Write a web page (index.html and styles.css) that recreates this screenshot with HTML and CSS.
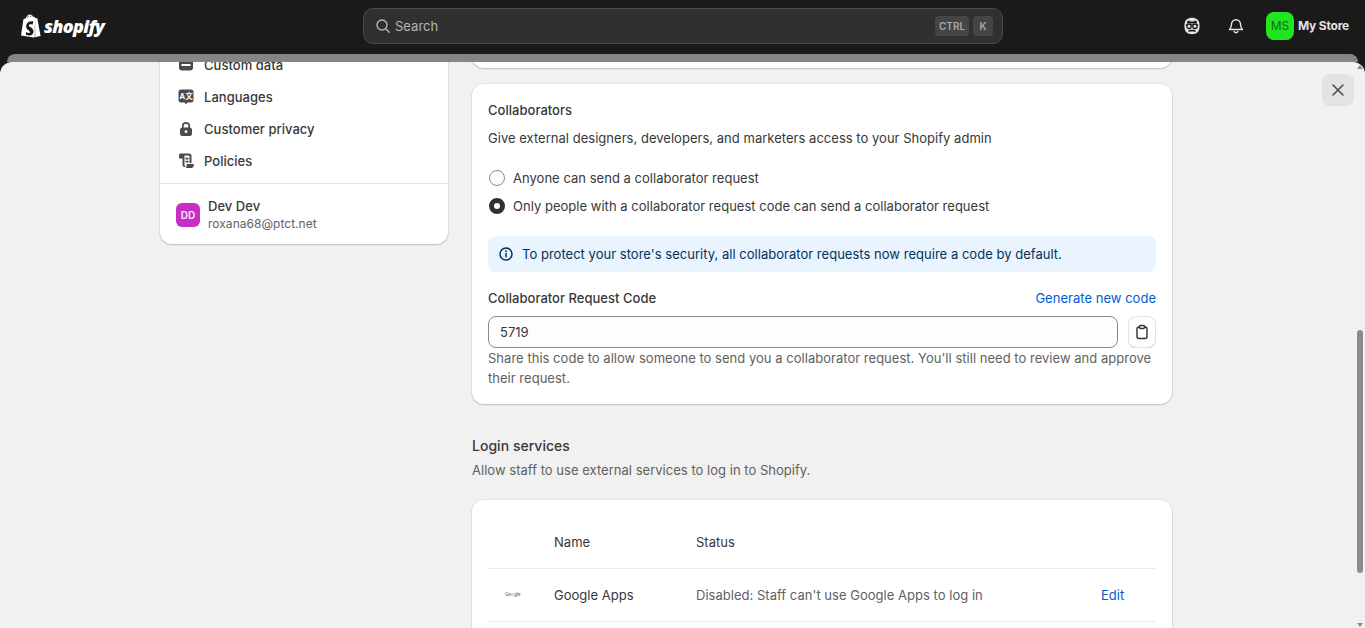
FILE: index.html
```html
<!doctype html>
<html lang="en">
  <head>
    <meta charset="UTF-8" />
    <meta name="viewport" content="width=device-width, initial-scale=1.0" />
    <title>Shopify admin - Users and permissions</title>
    <link rel="stylesheet" href="styles.css">
  </head>
  <body>
    <header class="topbar">
      <div class="brand">
        <svg class="brand-bag" width="22" height="25" viewBox="0 0 22 25">
          <path fill="#fff" d="M1 21.500 3.400 5.600c.1-.5.3-.7.8-.9l1.700-.5C6.500 2 8 .4 10 .4c1 0 1.500.5 1.800 1 .6 0 1.200.4 1.500 1.400l1 .1 1.300 1.200 1.700.2L20.600 22l-7 1.600z" />
          <path fill="#1a1a1a" d="M7.100 3.900c.4-1.300 1.400-2.400 2.700-2.500-.3.100-1.500.9-1.800 2.200zM10.500 3c0-.5 0-1-.2-1.300.6.100 1 .8 1.100 1zM12.200 2.600c-.1-.3-.2-.5-.3-.6.500.1.700.4.800.5z" />
          <path fill="#1a1a1a" d="M13.200 8.200 12.500 10.700c-.6-.3-1.300-.5-2-.4-1.700.1-1.700 1.100-1.700 1.400.1 1.400 4.500 1.700 4.700 5.400.2 3-1.600 4.400-3.900 4.500-2.600.1-3.900-1.300-3.900-1.300l.6-2.300s1.400 1.100 2.600 1c.8 0 1-.6 1-1-.1-2-3.500-1.900-3.700-5.300-.2-2.800 1.700-5.300 5.400-5.500 1 0 1.500.1 1.500.1z" />
          <path fill="#1a1a1a" d="M15 3.600 14.600 23.400l.8-.2-.3-19.500z" opacity=".5" />
        </svg>
        <span class="brand-name">shopify</span>
      </div>

      <div class="search">
        <svg width="16" height="16" viewBox="0 0 16 16" fill="none" stroke="#b5b5b5" stroke-width="1.400">
          <circle cx="7" cy="7" r="5" />
          <path d="m10.800 10.800 3.400 3.400" stroke-linecap="round" />
        </svg>
        <span class="search-text">Search</span>
        <span class="kbd kbd-ctrl">CTRL</span>
        <span class="kbd kbd-key">K</span>
      </div>

      <div class="top-actions">
        <svg class="top-icon" width="18" height="18" viewBox="0 0 18 18">
          <path fill="#e3e3e3" d="M9 .8c4.200 0 7.600 1.800 7.600 8.200S13.200 17.200 9 17.200 1.400 15.400 1.400 9 4.800.8 9 .8z" />
          <path fill="#1a1a1a" d="M2.800 7.300h12.400v1.200H2.800z" />
          <circle cx="6" cy="9.300" r="2.200" fill="#e3e3e3" stroke="#1a1a1a" stroke-width="1.300" />
          <circle cx="12" cy="9.300" r="2.200" fill="#e3e3e3" stroke="#1a1a1a" stroke-width="1.300" />
          <path fill="#1a1a1a" d="M4.800 3.600 9 4.800l4.200-1.200 1 2.900H3.800zM4.800 14.300c1.200-1.500 2.800-1.900 4.200-1.200 1.400-.7 3-.3 4.200 1.200-1.400.6-2.800.5-4.200 0-1.400.5-2.800.6-4.200 0z" />
        </svg>
        <svg class="top-icon bell" width="18" height="18" viewBox="0 0 18 18" fill="none" stroke="#e3e3e3" stroke-width="1.400" stroke-linejoin="round">
          <path d="M4.500 7.200a4.500 4.500 0 0 1 9 0c0 2.800 1 4 2 5.300H2.500c1-1.300 2-2.500 2-5.300z" />
          <path d="M7.200 14.500a1.900 1.900 0 0 0 3.600 0" stroke-linecap="round" />
        </svg>
        <div class="store">
          <span class="store-avatar">MS</span>
          <span class="store-name">My Store</span>
        </div>
      </div>
    </header>

    <div class="sheet-behind"></div>

    <main class="sheet">
      <button class="close-btn" aria-label="Close">
        <svg width="16" height="16" viewBox="0 0 16 16" fill="none" stroke="#4a4a4a" stroke-width="1.500" stroke-linecap="round">
          <path d="m3 3 10 10M13 3 3 13" />
        </svg>
      </button>

      <div class="scrollbar">
        <span class="arrow-up"></span>
        <span class="thumb"></span>
        <span class="arrow-down"></span>
      </div>

      <div class="layout">
        <aside class="side-card">
          <nav class="side-nav">
            <a class="nav-item">
              <svg width="16" height="16" viewBox="0 0 16 16">
                <rect x="1" y="2.500" width="14" height="11" rx="3" fill="#4a4a4a" />
                <rect x="3.500" y="7" width="9" height="2" fill="#fff" />
              </svg>
              Custom data
            </a>
            <a class="nav-item">
              <svg width="16" height="16" viewBox="0 0 16 16">
                <path fill="#4a4a4a" d="M3 .5h10A2.500 2.500 0 0 1 15.500 3v8a2.500 2.500 0 0 1-2.500 2.500H9.500L8 15.500 6.500 13.500H3A2.500 2.500 0 0 1 .5 11V3A2.500 2.500 0 0 1 3 .5z" />
                <text class="icon-glyph" x="1.600" y="10.200">A</text>
                <text class="icon-glyph" x="7.300" y="10.200">文</text>
              </svg>
              Languages
            </a>
            <a class="nav-item">
              <svg width="16" height="16" viewBox="0 0 16 16">
                <path fill="none" stroke="#4a4a4a" stroke-width="1.700" d="M4.800 7V5a3.200 3.200 0 0 1 6.400 0v2" />
                <rect x="2" y="6.500" width="12" height="8.500" rx="2.500" fill="#4a4a4a" />
                <circle cx="8" cy="10.700" r="1.400" fill="#fff" />
              </svg>
              Customer privacy
            </a>
            <a class="nav-item">
              <svg width="16" height="16" viewBox="0 0 16 16">
                <path fill="#4a4a4a" d="M2.500 .5H11a2.500 2.500 0 0 1 2.500 2.500v7h-2V3a.5.500 0 0 0-.5-.5H5.500V5.500H1V2A1.500 1.500 0 0 1 2.500 .5z" />
                <path fill="#4a4a4a" d="M4.500 2h2v9.500c0 1 .6 2 1.200 2.500H6.500C5 14 4.500 12.700 4.500 11.500zM8.500 11h7.300v1c0 1.500-.8 3-2.300 3H7.700c1-.8 1-2.700.8-4z" />
                <path fill="#4a4a4a" d="M7.500 4.800h3v1.700h-3zM7.500 7.800h3v1.700h-3z" />
              </svg>
              Policies
            </a>
          </nav>
          <div class="side-user">
            <span class="user-avatar">DD</span>
            <div>
              <div class="user-name">Dev Dev</div>
              <div class="user-mail">roxana68@ptct.net</div>
            </div>
          </div>
        </aside>

        <section class="content">
          <div class="card card-prev"></div>

          <div class="card">
            <h2 class="card-title">Collaborators</h2>
            <p class="card-desc">Give external designers, developers, and marketers access to your Shopify admin</p>

            <div class="radios">
              <label class="radio-row">
                <span class="radio"></span>
                Anyone can send a collaborator request
              </label>
              <label class="radio-row">
                <span class="radio checked"></span>
                Only people with a collaborator request code can send a collaborator request
              </label>
            </div>

            <div class="banner">
              <svg width="16" height="16" viewBox="0 0 16 16" fill="none" stroke="#00335b" stroke-width="1.500">
                <circle cx="8" cy="8" r="6" />
                <path d="M8 7.500v3.200" stroke-linecap="round" />
                <circle cx="8" cy="5.200" r=".9" fill="#00335b" stroke="none" />
              </svg>
              To protect your store's security, all collaborator requests now require a code by default.
            </div>

            <div class="code-head">
              <span class="code-label">Collaborator Request Code</span>
              <a class="link">Generate new code</a>
            </div>
            <div class="code-row">
              <div class="code-input">5719</div>
              <button class="copy-btn" aria-label="Copy">
                <svg width="16" height="16" viewBox="0 0 16 16" fill="none" stroke="#303030" stroke-width="1.400" stroke-linejoin="round">
                  <rect x="3" y="3" width="10" height="11.500" rx="2" />
                  <rect x="5.500" y="1.500" width="5" height="3" rx="1" fill="#fff" />
                </svg>
              </button>
            </div>
            <p class="help">Share this code to allow someone to send you a collaborator request. You'll still need to review and approve their request.</p>
          </div>

          <div class="section-head">
            <h2 class="section-title">Login services</h2>
            <p class="section-desc">Allow staff to use external services to log in to Shopify.</p>
          </div>

          <div class="card">
            <table class="services">
              <thead>
                <tr>
                  <th class="col-logo"></th>
                  <th class="col-name">Name</th>
                  <th>Status</th>
                  <th></th>
                </tr>
              </thead>
              <tbody>
                <tr>
                  <td class="google-logo"><span class="g-blue">G</span><span class="g-red">o</span><span class="g-yellow">o</span><span class="g-blue">g</span><span class="g-green">l</span><span class="g-red">e</span></td>
                  <td class="service-name">Google Apps</td>
                  <td class="service-status">Disabled: Staff can't use Google Apps to log in</td>
                  <td class="service-edit"><a class="link">Edit</a></td>
                </tr>
              </tbody>
            </table>
          </div>
        </section>
      </div>
    </main>
  </body>
</html>
```

FILE: styles.css
```css
* {
  box-sizing: border-box;
}
html,
body {
  height: 100%;
}
body {
  margin: 0;
  display: flex;
  flex-direction: column;
  overflow: hidden;
  background: #1a1a1a;
  color: #383838;
  font-family: Inter, 'Noto Sans', sans-serif;
  font-size: 13px;
  line-height: 20px;
  letter-spacing: 0.025px;
}
h2,
p {
  margin: 0;
}

/* top bar */
.topbar {
  flex: none;
  height: 54px;
  display: flex;
  align-items: center;
  padding: 0 15px 2px 20px;
}
.brand {
  width: 343px;
  display: flex;
  align-items: center;
  gap: 2px;
}
.brand-name {
  color: #fff;
  font-family: 'Open Sans', sans-serif;
  font-style: italic;
  font-weight: 800;
  font-size: 18px;
  letter-spacing: -0.7px;
}
.search {
  width: 640px;
  height: 36px;
  display: flex;
  align-items: center;
  gap: 4px;
  padding: 0 9px 0 11px;
  background: #303030;
  border: 1px solid #4a4a4a;
  border-radius: 10px;
}
.search-text {
  flex: 1;
  color: #b5b5b5;
}
.kbd {
  height: 20px;
  background: #454545;
  border-radius: 4px;
  color: #a8a8a8;
  font-size: 10px;
  font-weight: 600;
  line-height: 21px;
  text-align: center;
}
.kbd-ctrl {
  width: 34px;
}
.kbd-key {
  width: 20px;
}
.top-actions {
  flex: 1;
  display: flex;
  align-items: center;
  padding-left: 180px;
}
.top-icon {
  flex: none;
}
.bell {
  margin-left: 26px;
}
.store {
  display: flex;
  align-items: center;
  gap: 4px;
  margin-left: 21px;
}
.store-avatar {
  flex: none;
  width: 28px;
  height: 28px;
  display: flex;
  align-items: center;
  justify-content: center;
  background: #22e522;
  border-radius: 8px;
  color: #0f6b14;
  font-size: 12px;
}
.store-name {
  color: #e3e3e3;
  font-size: 12px;
  font-weight: 700;
  letter-spacing: -0.2px;
  white-space: nowrap;
}

/* the sheet */
.sheet-behind {
  flex: none;
  height: 8px;
  margin: 0 7px;
  background: #858585;
  border-radius: 10px 10px 0 0;
}
.sheet {
  flex: 1;
  position: relative;
  overflow: hidden;
  background: #f1f1f1;
  border-radius: 12px 12px 0 0;
}
.close-btn {
  position: absolute;
  top: 12px;
  right: 11px;
  width: 32px;
  height: 32px;
  display: flex;
  align-items: center;
  justify-content: center;
  padding: 0;
  background: #e3e3e3;
  border: none;
  border-radius: 8px;
}
.scrollbar {
  position: absolute;
  top: 0;
  right: 0;
  bottom: 0;
  width: 10px;
}
.thumb {
  position: absolute;
  top: 268px;
  left: 2px;
  width: 6px;
  height: 243px;
  background: #8b8b8b;
  border-radius: 3px;
}
.arrow-up,
.arrow-down {
  position: absolute;
  left: 2px;
  width: 0;
  height: 0;
  border-left: 3px solid transparent;
  border-right: 3px solid transparent;
}
.arrow-up {
  top: 3px;
  border-bottom: 4px solid #8b8b8b;
}
.arrow-down {
  bottom: 1px;
  border-top: 4px solid #8b8b8b;
}

.layout {
  display: grid;
  grid-template-columns: 288px 700px;
  gap: 24px;
  align-items: start;
  margin: -34px 0 0 160px;
}

/* left menu */
.side-card {
  background: #fff;
  border-radius: 12px;
  box-shadow: 0 1px 2px rgba(0, 0, 0, 0.2), 0 0 0 1px rgba(0, 0, 0, 0.03);
}
.side-nav {
  padding: 21px 0 6px;
  border-bottom: 1px solid #e3e3e3;
}
.nav-item {
  height: 32px;
  display: flex;
  align-items: center;
  gap: 10px;
  padding-left: 18px;
  font-weight: 500;
}
.icon-glyph {
  fill: #fff;
  font-family: Inter, 'Noto Sans CJK SC', sans-serif;
  font-size: 7.500px;
  font-weight: 700;
}
.side-user {
  height: 60px;
  display: flex;
  align-items: center;
  gap: 8px;
  padding: 2px 0 0 16px;
}
.user-avatar {
  width: 24px;
  height: 24px;
  display: flex;
  align-items: center;
  justify-content: center;
  background: #c62fc6;
  border-radius: 6px;
  color: #f6dcf6;
  font-size: 10px;
  font-weight: 700;
}
.user-name {
  font-weight: 500;
  line-height: 18px;
}
.user-mail {
  color: #616161;
  font-size: 12px;
  line-height: 18px;
}

/* cards */
.content {
  min-width: 0;
}
.card {
  margin-top: 16px;
  padding: 16px;
  background: #fff;
  border-radius: 12px;
  box-shadow: 0 1px 2px rgba(0, 0, 0, 0.2), 0 0 0 1px rgba(0, 0, 0, 0.03);
}
.card-prev {
  height: 40px;
  margin-top: 0;
}
.card-title {
  font-size: 13px;
  font-weight: 550;
}
.card-desc {
  margin-top: 8px;
}
.radios {
  margin-top: 16px;
}
.radio-row {
  height: 28px;
  display: flex;
  align-items: center;
  gap: 8px;
  padding-left: 1px;
}
.radio {
  width: 16px;
  height: 16px;
  background: #fdfdfd;
  border: 1px solid #8a8a8a;
  border-radius: 50%;
}
.radio.checked {
  background: #fff;
  border: 5px solid #303030;
}
.banner {
  height: 36px;
  display: flex;
  align-items: center;
  gap: 8px;
  margin-top: 16px;
  padding-left: 10px;
  background: #eaf4ff;
  border-radius: 8px;
  color: #00335b;
}
.code-head {
  display: flex;
  justify-content: space-between;
  margin-top: 16px;
}
.code-label {
  font-weight: 500;
}
.link {
  color: #005bd3;
}
.code-row {
  display: flex;
  gap: 10px;
  margin-top: 8px;
}
.code-input {
  flex: 1;
  height: 32px;
  padding: 0 11px;
  background: #fdfdfd;
  border: 1px solid #8a8a8a;
  border-radius: 8px;
  line-height: 30px;
}
.copy-btn {
  flex: none;
  width: 28px;
  height: 32px;
  display: flex;
  align-items: center;
  justify-content: center;
  padding: 0;
  background: #fff;
  border: none;
  border-radius: 8px;
  box-shadow: inset 0 0 0 1px #e3e3e3, inset 0 -1px 0 #b5b5b5;
}
.help {
  color: #616161;
}
.section-head {
  margin-top: 32px;
}
.section-title {
  font-size: 14px;
  font-weight: 550;
}
.section-desc {
  margin-top: 4px;
  color: #616161;
}
.section-head + .card {
  margin-top: 20px;
  padding-bottom: 40px;
}

/* login services table */
.services {
  width: 100%;
  border-collapse: collapse;
}
.services th {
  height: 52px;
  padding: 0;
  border-bottom: 1px solid #ebebeb;
  font-weight: 400;
  text-align: left;
}
.services td {
  height: 53px;
  padding: 0;
  border-bottom: 1px solid #ebebeb;
}
.col-logo {
  width: 66px;
}
.col-name {
  width: 142px;
}
.google-logo {
  padding-left: 17px !important;
  font-size: 4.500px;
  font-weight: 600;
}
.g-blue {
  color: #4285f4;
}
.g-red {
  color: #ea4335;
}
.g-yellow {
  color: #fbbc05;
}
.g-green {
  color: #34a853;
}
.service-status {
  color: #616161;
}
.service-edit {
  width: 70px;
  padding-left: 15px !important;
}
```
